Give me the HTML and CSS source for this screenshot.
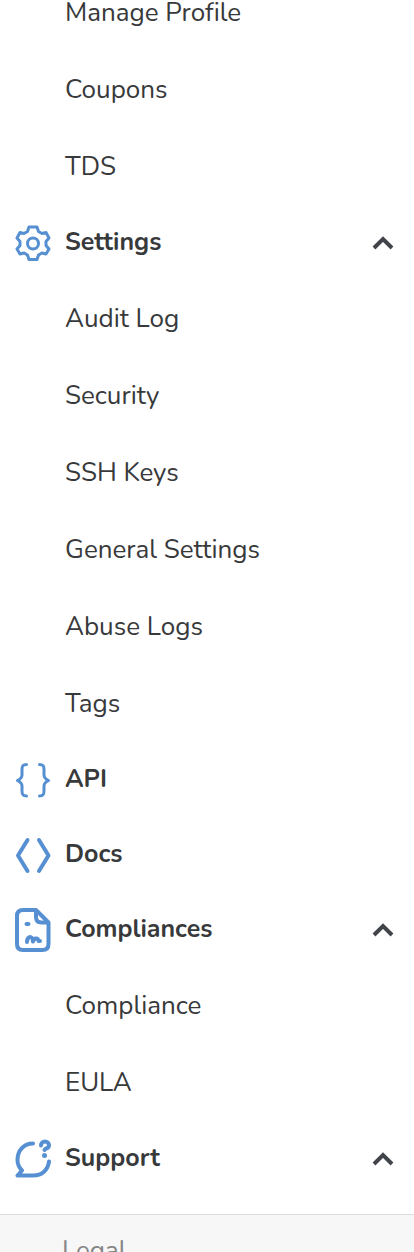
FILE: index.html
```html
<!DOCTYPE html>
<html lang="en">
<head>
<meta charset="utf-8">
<meta name="viewport" content="width=device-width, initial-scale=1">
<title>Navigation</title>
<link rel="stylesheet" href="styles.css">
</head>
<body>
<div class="sidebar">
  <nav class="menu" aria-label="Main">
    <a class="sub" href="#">Manage Profile</a>
    <a class="sub" href="#">Coupons</a>
    <a class="sub" href="#">TDS</a>

    <button class="head" type="button" aria-expanded="true">
      <svg class="icon" viewBox="0 0 36 44" aria-hidden="true"><path d="M14 6h8l1.500 4.500 3.500 2 4-1 3 5.500-3 3.500v4l3 3.500-3 5-4-1-3.500 2-1.500 4.500h-8l-1.500-4.500-3.500-2-4 1-3-5 3-3.500v-4l-3-3.500 3-5.500 4 1 3.500-2z"/><circle cx="18" cy="22.500" r="5.500"/></svg>
      <span class="label">Settings</span>
      <svg class="chevron" viewBox="0 0 22 14" aria-hidden="true"><path d="M2 12l9-9 9 9"/></svg>
    </button>
    <a class="sub" href="#">Audit Log</a>
    <a class="sub" href="#">Security</a>
    <a class="sub" href="#">SSH Keys</a>
    <a class="sub" href="#">General Settings</a>
    <a class="sub" href="#">Abuse Logs</a>
    <a class="sub" href="#">Tags</a>

    <a class="head" href="#">
      <svg class="icon" viewBox="0 0 36 44" aria-hidden="true"><path d="M11.500 6.500C7.500 6.500 7 8.500 7 11v6c0 3-1.500 4-4.500 5.500C5.500 24 7 25 7 28v5c0 3 .5 5 4.500 5M24.500 6.500c4 0 4.500 2 4.500 4.500v6c0 3 1.500 4 4.500 5.500C30.500 24 29 25 29 28v5c0 3-.5 5-4.500 5"/></svg>
      <span class="label">API</span>
    </a>
    <a class="head" href="#">
      <svg class="icon icon-bold" viewBox="0 0 36 44" aria-hidden="true"><path d="M12.500 7L3 22.500 12.500 38M24 7l9.500 15.500L24 38"/></svg>
      <span class="label">Docs</span>
    </a>

    <button class="head" type="button" aria-expanded="true">
      <svg class="icon icon-bold" viewBox="0 0 36 44" aria-hidden="true"><path d="M8 2h13l12.500 12.500V36q0 6-6 6H8q-6 0-6-6V8q0-6 6-6z"/><path d="M21 3v6q0 5.500 5.500 5.500h6M11.500 16h2M12 34c0-5 4-6.500 5.500-3l.5 2.500c1-4 5-4 5.500-.5h1.500"/></svg>
      <span class="label">Compliances</span>
      <svg class="chevron" viewBox="0 0 22 14" aria-hidden="true"><path d="M2 12l9-9 9 9"/></svg>
    </button>
    <a class="sub" href="#">Compliance</a>
    <a class="sub" href="#">EULA</a>

    <button class="head" type="button" aria-expanded="true">
      <svg class="icon icon-bold" viewBox="0 0 36 44" aria-hidden="true"><path d="M18 6.500C9 6.500 2.500 13.500 2.500 23c0 4 1.500 7.500 4.500 10.500L2.500 38.500H18c9 0 15-5.500 16-14"/><path d="M26 8.500c0-5.500 8-5.500 8 0 0 3.500-3.500 2-4.500 4.500"/><circle cx="29.500" cy="18.500" r="2.500" fill="#5690d2" stroke="none"/></svg>
      <span class="label">Support</span>
      <svg class="chevron" viewBox="0 0 22 14" aria-hidden="true"><path d="M2 12l9-9 9 9"/></svg>
    </button>
  </nav>
  <footer class="footer"><a class="legal" href="#">Legal</a></footer>
</div>
</body>
</html>
```
FILE: styles.css
```css
* { box-sizing: border-box; }
body {
  margin: 0;
  background: #fff;
  color: #38393b;
  font-family: Nunito, "Noto Sans", sans-serif;
  font-size: 26px;
  font-variant-ligatures: none;
  line-height: 36px;
}
a { color: inherit; text-decoration: none; }
.sidebar {
  display: flex;
  flex-direction: column;
  height: 100vh;
  overflow: hidden;
}
.menu {
  display: flex;
  flex: none;
  flex-direction: column;
  /* the list is scrolled part of a row past the top */
  margin-top: -26px;
  padding-bottom: 18px;
}
.sub {
  display: flex;
  align-items: center;
  height: 77px;
  padding: 0 20px 0 65px;
}
.head {
  display: flex;
  align-items: center;
  gap: 14px;
  width: 100%;
  height: 75px;
  padding: 0 20px 0 15px;
  border: 0;
  background: none;
  color: inherit;
  font: inherit;
  font-size: 25px;
  font-weight: 700;
  font-variant-ligatures: none;
  text-align: left;
  cursor: pointer;
}
.label {
  flex: 1;
  padding-bottom: 2px;
}
.icon {
  flex: none;
  width: 36px;
  height: 44px;
  fill: none;
  stroke: #5690d2;
  stroke-width: 3;
  stroke-linecap: round;
  stroke-linejoin: round;
}
.icon-bold { stroke-width: 4; }
.chevron {
  flex: none;
  width: 22px;
  height: 14px;
  fill: none;
  stroke: #414448;
  stroke-width: 4;
}
.footer {
  flex: none;
  padding: 18px 62px;
  border-top: 1px solid #dedede;
  background: #f7f7f7;
  color: #858585;
}
```
